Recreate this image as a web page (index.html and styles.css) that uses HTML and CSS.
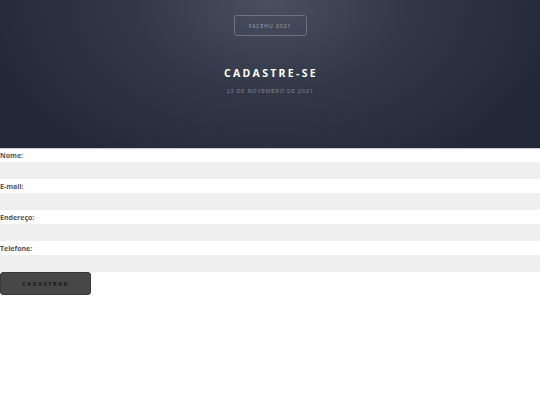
FILE: index.html
```html
<!DOCTYPE html>
<html lang="pt">
<head>
<meta charset="utf-8">
<title>Cadastre-se</title>
<link rel="stylesheet" href="styles.css">
</head>
<body>
<header class="hero">
  <div class="badge">FACEHU 2021</div>
  <h1 class="title">CADASTRE-SE</h1>
  <p class="date">23 DE NOVEMBRO DE 2021</p>
</header>
<form class="form">
  <label class="label" for="nome">Nome:</label>
  <input class="field" id="nome" type="text">
  <label class="label" for="email">E-mail:</label>
  <input class="field" id="email" type="text">
  <label class="label" for="end">Endereço:</label>
  <input class="field" id="end" type="text">
  <label class="label" for="tel">Telefone:</label>
  <input class="field" id="tel" type="text">
  <button class="btn" type="button">CADASTRAR</button>
</form>
</body>
</html>
```
FILE: styles.css
```css
html, body {
  margin: 0;
  padding: 0;
  background: #ffffff;
  font-family: "Open Sans", "Liberation Sans", sans-serif;
}
.hero {
  height: 149px;
  box-sizing: border-box;
  padding-top: 15px;
  display: flex;
  flex-direction: column;
  align-items: center;
  background: radial-gradient(ellipse 300px 200px at 50% 0%, #4a5060 0%, #323847 45%, #222838 100%);
  background-color: #1f2535;
  border-bottom: 1px solid #c8ccd4;
}
.badge {
  width: 73px;
  height: 21px;
  box-sizing: border-box;
  border: 1px solid #6d7280;
  border-radius: 3px;
  display: flex;
  align-items: center;
  justify-content: center;
  font-size: 5px;
  letter-spacing: 1px;
  color: #a9adb8;
}
.title {
  margin: 30px 0 0 0;
  font-size: 10.5px;
  line-height: 14px;
  font-weight: 700;
  letter-spacing: 2.3px;
  color: #ffffff;
  padding-left: 2px;
}
.date {
  margin: 7px 0 0 0;
  font-size: 5.5px;
  line-height: 8px;
  letter-spacing: 0.8px;
  color: #858b98;
}
.form {
  display: flex;
  flex-direction: column;
  align-items: flex-start;
}
.label {
  font-size: 7px;
  line-height: 10px;
  font-weight: 700;
  color: #555555;
  margin-top: 2px;
}
.field {
  display: block;
  width: 100%;
  height: 17px;
  box-sizing: border-box;
  border: none;
  border-radius: 0 2px 2px 0;
  background: #efefef;
  margin: 1px 0 1px 0;
  padding: 0;
}
.field:last-of-type {
  margin-bottom: 0;
}
.btn {
  width: 91px;
  height: 23px;
  margin: 0;
  border: 1px solid #3a3a3a;
  border-radius: 3px;
  background: #474747;
  color: #151515;
  font-family: "Open Sans", "Liberation Sans", sans-serif;
  font-size: 5.5px;
  font-weight: 700;
  letter-spacing: 1.6px;
  padding: 0;
}
```
